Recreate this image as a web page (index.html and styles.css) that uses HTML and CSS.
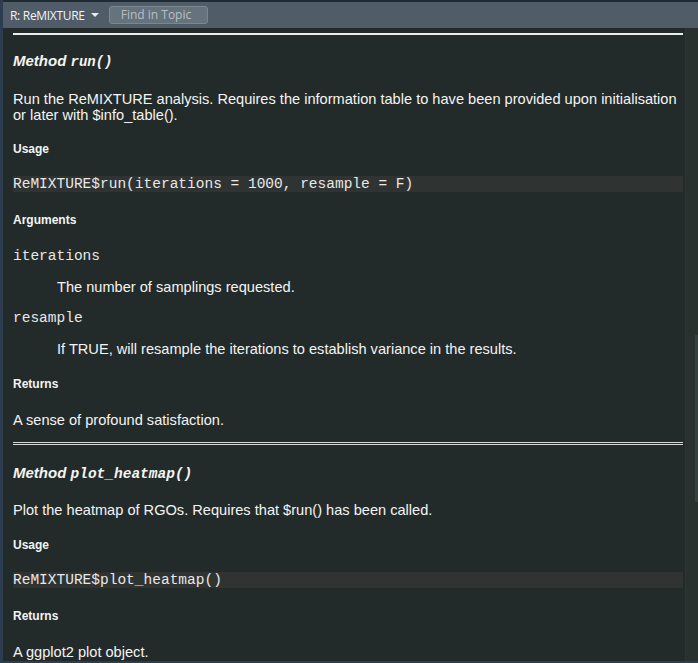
FILE: index.html
```html
<!DOCTYPE html>
<html>
<head>
<meta charset="utf-8">
<link rel="stylesheet" href="styles.css">
</head>
<body>
<div class="pane">
  <div class="toolbar">
    <span class="topic">R: ReMIXTURE <span class="caret"></span></span>
    <span class="find">Find in Topic</span>
  </div>
  <div class="main">
    <div class="content">
      <hr class="rule rule-top">
      <h3 class="method m1">Method <code>run()</code></h3>
      <p class="para p1">Run the ReMIXTURE analysis. Requires the information table to have been provided upon initialisation or later with $info_table().</p>
      <h4 class="sub s1">Usage</h4>
      <pre class="usage u1">ReMIXTURE$run(iterations = 1000, resample = F)</pre>
      <h4 class="sub s2">Arguments</h4>
      <dl class="args">
        <dt class="arg a1">iterations</dt>
        <dd class="desc">The number of samplings requested.</dd>
        <dt class="arg a2">resample</dt>
        <dd class="desc">If TRUE, will resample the iterations to establish variance in the results.</dd>
      </dl>
      <h4 class="sub s3">Returns</h4>
      <p class="para p2">A sense of profound satisfaction.</p>
      <hr class="rule rule-mid">
      <h3 class="method m2">Method <code>plot_heatmap()</code></h3>
      <p class="para p3">Plot the heatmap of RGOs. Requires that $run() has been called.</p>
      <h4 class="sub s4">Usage</h4>
      <pre class="usage u2">ReMIXTURE$plot_heatmap()</pre>
      <h4 class="sub s5">Returns</h4>
      <p class="para p4">A ggplot2 plot object.</p>
    </div>
    <div class="scroll"><div class="thumb"></div></div>
  </div>
</div>
</body>
</html>
```
FILE: styles.css
```css
html, body {
  margin: 0;
  padding: 0;
  background: #2b3b4d;
  overflow: hidden;
}
.pane {
  width: 698px;
  height: 663px;
  box-sizing: border-box;
  border-left: 3px solid #2c3d51;
  border-bottom: 2px solid #2c3d51;
  display: flex;
  flex-direction: column;
  background: #232b2a;
}
.toolbar {
  height: 26px;
  border-top: 2px solid #1f2a33;
  background: #505c67;
  display: flex;
  align-items: center;
  font-family: "Open Sans", "Liberation Sans", sans-serif;
  font-size: 12px;
  color: #f2f4f6;
  flex: none;
}
.topic {
  margin-left: 7px;
  letter-spacing: -0.3px;
  display: flex;
  align-items: center;
}
.caret {
  display: inline-block;
  width: 0;
  height: 0;
  margin-left: 6px;
  border-left: 4px solid transparent;
  border-right: 4px solid transparent;
  border-top: 4px solid #e8ecef;
}
.find {
  margin-left: 10px;
  width: 99px;
  height: 18px;
  box-sizing: border-box;
  padding-left: 11px;
  line-height: 16px;
  background: #66727c;
  border: 1px solid #7b8791;
  border-radius: 3px;
  color: #b8c0c7;
  font-size: 12px;
}
.main {
  flex: 1;
  display: flex;
  min-height: 0;
}
.content {
  flex: 1;
  padding: 0 2px 0 10px;
  overflow: hidden;
  font-family: "Liberation Sans", Arial, sans-serif;
  font-size: 14.6px;
  color: #f4f4f4;
}
.scroll {
  width: 12px;
  flex: none;
  background: #29312f;
  border-left: 1px solid #2d3534;
  position: relative;
}
.thumb {
  position: absolute;
  right: 0;
  top: 307px;
  width: 3px;
  height: 167px;
  background: #36403f;
}
.rule {
  margin: 0;
  border: 0;
}
.rule-top {
  margin-top: 5px;
  height: 2px;
  background: #e9ecea;
}
.rule-mid {
  margin-top: 14px;
  height: 1px;
  border-top: 1px solid #d5dad8;
  border-bottom: 1px solid #d5dad8;
}
.method {
  margin: 0;
  font-size: 15px;
  line-height: 18px;
  font-weight: bold;
  font-style: italic;
}
.method code {
  font-family: "Liberation Mono", "Courier New", monospace;
  font-size: 14px;
  font-weight: bold;
  font-style: italic;
}
.m2 code {
  font-size: 14.5px;
}
.m1 { margin-top: 17px; }
.m2 { margin-top: 19px; }
.para {
  margin: 0;
  line-height: 16px;
}
.p1 { margin-top: 20px; }
.p2 { margin-top: 21px; }
.p3 { margin-top: 19px; }
.p4 { margin-top: 21px; }
.sub {
  margin: 0;
  font-size: 12px;
  line-height: 14px;
  font-weight: bold;
}
.s1 { margin-top: 19px; }
.s2 { margin-top: 21px; }
.s3 { margin-top: 20px; }
.s4 { margin-top: 20px; }
.s5 { margin-top: 21px; }
.usage {
  margin: 0;
  height: 16px;
  line-height: 16px;
  background: #2f3433;
  font-family: "Liberation Mono", "Courier New", monospace;
  font-size: 14.5px;
  color: #e8e8e8;
}
.u1 { margin-top: 20px; }
.u2 { margin-top: 20px; }
.args {
  margin: 0;
}
.arg {
  font-family: "Liberation Mono", "Courier New", monospace;
  font-size: 14.5px;
  line-height: 16px;
  color: #e8e8e8;
}
.a1 { margin-top: 21px; }
.a2 { margin-top: 15px; }
.desc {
  margin: 15px 0 0 44px;
  line-height: 16px;
}
```
